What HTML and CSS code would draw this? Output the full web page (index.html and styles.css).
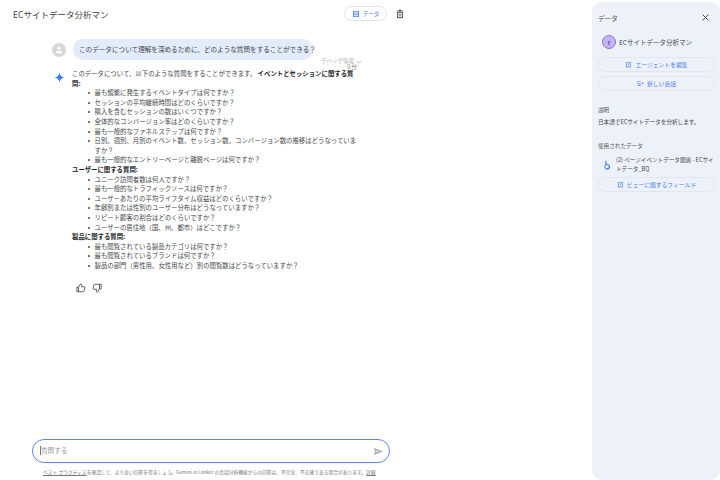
FILE: index.html
```html
<!DOCTYPE html>
<html lang="ja">
<head>
<meta charset="utf-8">
<title>ECサイトデータ分析マン</title>
<link rel="stylesheet" href="styles.css">
</head>
<body>
<div class="app">
  <main class="main">
    <header class="topbar">
      <h1 class="title">ECサイトデータ分析マン</h1>
      <div class="top-actions">
        <button class="data-btn"><svg class="ic-blue" viewBox="0 0 24 24" width="8" height="8"><path d="M3 3h18v18H3zM5.500 5.500v3h13v-3zM5.500 10.500v3h13v-3zM5.500 15.500v3h13v-3z" fill-rule="evenodd"/></svg>データ</button>
        <svg class="trash" viewBox="0 0 24 24" width="10" height="10"><path d="M9 2h6l1 2h4v2H4V4h4zM5 7h14v15H5zm2.500 2v10.500h9V9zM9.500 10.500h1.500v7.500H9.500zm3.500 0h1.500v7.500H13z" fill-rule="evenodd"/></svg>
      </div>
    </header>

    <section class="chat">
      <div class="user-row">
        <span class="avatar"><svg viewBox="0 0 24 24" width="10" height="10"><circle cx="12" cy="8" r="4.200"/><path d="M4 20c0-4 4-6 8-6s8 2 8 6z"/></svg></span>
        <div class="bubble">このデータについて理解を深めるために、どのような質問をすることができる？</div>
      </div>
      <div class="debug"><span>デバッグ情報</span><svg viewBox="0 0 10 6" width="6" height="4"><path d="M1 1l4 4 4-4" fill="none" stroke="#aaa" stroke-width="1.200"/></svg><b>0 分</b></div>

      <div class="answer-row">
        <svg class="spark" viewBox="0 0 24 24" width="11" height="11"><path d="M12 1c1 6.500 4.500 10 11 11-6.500 1-10 4.500-11 11-1-6.500-4.500-10-11-11 6.500-1 10-4.500 11-11z"/></svg>
        <div class="answer">
          <p>このデータについて、以下のような質問をすることができます。 <strong>イベントとセッションに関する質問:</strong></p>
          <ul>
            <li>最も頻繁に発生するイベントタイプは何ですか？</li>
            <li>セッションの平均継続時間はどのくらいですか？</li>
            <li>購入を含むセッションの数はいくつですか？</li>
            <li>全体的なコンバージョン率はどのくらいですか？</li>
            <li>最も一般的なファネルステップは何ですか？</li>
            <li>日別、週別、月別のイベント数、セッション数、コンバージョン数の推移はどうなっていますか？</li>
            <li>最も一般的なエントリーページと離脱ページは何ですか？</li>
          </ul>
          <p><strong>ユーザーに関する質問:</strong></p>
          <ul>
            <li>ユニーク訪問者数は何人ですか？</li>
            <li>最も一般的なトラフィックソースは何ですか？</li>
            <li>ユーザーあたりの平均ライフタイム収益はどのくらいですか？</li>
            <li>年齢別または性別のユーザー分布はどうなっていますか？</li>
            <li>リピート顧客の割合はどのくらいですか？</li>
            <li>ユーザーの居住地（国、州、都市）はどこですか？</li>
          </ul>
          <p><strong>製品に関する質問:</strong></p>
          <ul>
            <li>最も閲覧されている製品カテゴリは何ですか？</li>
            <li>最も閲覧されているブランドは何ですか？</li>
            <li>製品の部門（男性用、女性用など）別の閲覧数はどうなっていますか？</li>
          </ul>
          <div class="feedback">
            <svg viewBox="0 0 24 24" width="10" height="10"><path d="M2 10h4v11H2zM6 10l5-8c2 0 3 1.500 2.500 3.500L13 9h7c1.500 0 2 1.500 1.500 2.500L19 20c-.3.700-1 1-1.700 1H6" fill="none" stroke="#444" stroke-width="2"/></svg>
            <svg viewBox="0 0 24 24" width="10" height="10"><path d="M22 14h-4V3h4zM18 14l-5 8c-2 0-3-1.500-2.500-3.500L11 15H4c-1.500 0-2-1.500-1.500-2.500L5 4c.3-.7 1-1 1.700-1H18" fill="none" stroke="#444" stroke-width="2"/></svg>
          </div>
        </div>
      </div>
    </section>

    <footer class="composer-wrap">
      <div class="composer">
        <span class="caret"></span><span class="placeholder">質問する</span>
        <svg class="send" viewBox="0 0 24 24" width="11" height="11"><path d="M2 4l20 8-20 8 2-8-2-8zm4 6.500v3l6-1.500z" fill-rule="evenodd"/></svg>
      </div>
      <p class="disclaimer"><u>ベスト プラクティス</u>を確認して、より良い回答を得ましょう。Gemini in Looker の会話分析機能からの回答は、不完全、不正確である場合があります。<u>詳細</u></p>
    </footer>
  </main>

  <aside class="panel">
    <div class="panel-head"><span>データ</span><svg viewBox="0 0 12 12" width="7" height="7"><path d="M1 1l10 10M11 1L1 11" stroke="#444" stroke-width="1.700"/></svg></div>
    <div class="agent"><span class="agent-badge">E</span><span>ECサイトデータ分析マン</span></div>
    <button class="pill"><svg class="ic-blue" viewBox="0 0 24 24" width="7" height="7"><path d="M3 4h10v2.500H5.500v12h12V11H20v10H3zM20 2l2 2-10 10H10v-2z"/></svg>エージェントを編集</button>
    <button class="pill"><svg class="ic-blue" viewBox="0 0 24 24" width="7" height="7"><path d="M2 4h11v2H4v6h9v2H2zM2 16h11v4H2zM15 10h3V7h2v3h3v2h-3v3h-2v-3h-3z"/></svg>新しい会話</button>
    <h2 class="label desc-label">説明</h2>
    <p class="desc">日本語でECサイトデータを分析します。</p>
    <h2 class="label used-label">使用されたデータ</h2>
    <div class="source">
      <svg class="ic-blue" viewBox="0 0 24 24" width="10" height="10"><path d="M8 2h3v7.500a7 7 0 1 1-3 1.500zm4 10a4 4 0 1 0 .01 0z" fill-rule="evenodd"/></svg>
      <span>(2) ページイベントデータ関連 - ECサイトデータ_BQ</span>
    </div>
    <button class="pill"><svg class="ic-blue" viewBox="0 0 24 24" width="7" height="7"><path d="M3 4h10v2.500H5.500v12h12V11H20v10H3zM20 2l2 2-10 10H10v-2z"/></svg>ビューに関するフィールド</button>
  </aside>
</div>
</body>
</html>
```

FILE: styles.css
```css
* { box-sizing: border-box; }
html, body { margin: 0; height: 100%; }
body {
  background: #fff;
  color: #45484c;
  font-family: "Noto Sans CJK JP", "Noto Sans", sans-serif;
  font-size: 6.400px;
  overflow: hidden;
}
.app { display: flex; width: 720px; height: 480px; }
.main { width: 592px; display: flex; flex-direction: column; }
.topbar {
  width: 420px;
  height: 27px;
  padding: 0 15px 0 13px;
  display: flex;
  align-items: center;
  justify-content: space-between;
}
.title { margin: 0; font-size: 8.500px; font-weight: 400; color: #3c4043; }
.top-actions { display: flex; align-items: center; gap: 8px; }
.data-btn {
  width: 43px;
  height: 15px;
  display: flex;
  align-items: center;
  justify-content: center;
  gap: 3px;
  padding: 0;
  border: 1px solid #dfe4ee;
  border-radius: 8px;
  background: #fff;
  color: #4f83ea;
  font: inherit;
  font-size: 5.500px;
}
.ic-blue { fill: #4f83ea; flex: none; }
.trash { fill: #555; }
.chat { position: relative; flex: 1; width: 420px; padding-top: 12px; }
.user-row { display: flex; align-items: center; gap: 7px; margin-left: 52px; }
.avatar {
  width: 14px;
  height: 14px;
  border-radius: 50%;
  background: #d6d7d9;
  display: flex;
  align-items: center;
  justify-content: center;
}
.avatar svg { fill: #fff; }
.bubble {
  width: 240px;
  height: 21px;
  padding: 0 6px;
  border-radius: 10px;
  background: #e3ecfb;
  line-height: 20px;
  font-size: 6.600px;
  white-space: nowrap;
}
.debug {
  position: absolute;
  left: 321px;
  top: 31px;
  width: 42px;
  color: #b0b0b0;
  font-size: 5.500px;
  line-height: 6px;
}
.debug svg { position: absolute; left: 35px; top: 2px; }
.debug b { display: block; font-weight: 400; text-align: right; padding-right: 6px; color: #777; }
.answer-row { display: flex; margin-top: 9px; margin-left: 54px; gap: 7px; }
.spark { flex: none; margin-top: 3px; fill: #3f7cf0; }
.answer { width: 284.500px; line-height: 9.600px; }
.answer p { margin: 0; }
.answer strong { color: #26282b; font-weight: 700; }
.answer ul { margin: 0; padding-left: 22.500px; list-style: none; }
.answer li { position: relative; }
.answer li::before {
  content: "";
  position: absolute;
  left: -6.500px;
  top: 4px;
  width: 2px;
  height: 2px;
  border-radius: 50%;
  background: #45484c;
}
.feedback { display: flex; gap: 6px; margin: 13px 0 0 4px; }
.composer-wrap { width: 420px; padding: 0 0 4px 32px; }
.composer {
  position: relative;
  width: 358px;
  height: 24px;
  display: flex;
  align-items: center;
  padding: 0 0 2px 7px;
  border: 1px solid #5f84dc;
  border-radius: 12px;
  background: #fff;
}
.caret { width: 1px; height: 9px; background: #777; }
.placeholder { color: #9a9a9a; font-size: 6.600px; }
.send { position: absolute; right: 5px; top: 6px; fill: #b3b3b3; }
.disclaimer {
  margin: 5px 0 0 11px;
  width: 340px;
  font-size: 4.760px;
  line-height: 8px;
  color: #75787c;
  white-space: nowrap;
}
.panel {
  width: 128px;
  height: 478px;
  margin-top: 2px;
  padding: 9px 6px 0;
  background: #edf1fa;
  border-radius: 10px;
  display: flex;
  flex-direction: column;
}
.panel-head { display: flex; align-items: center; justify-content: space-between; padding: 0 5px 0 0; height: 13px; font-size: 6.600px; color: #555; }
.agent { display: flex; align-items: center; gap: 3px; height: 14px; margin: 11px 0 8px 4px; font-size: 6.500px; }
.agent-badge {
  width: 14px;
  height: 14px;
  border-radius: 50%;
  background: #c5b5f5;
  border: 1px solid #8a6fe0;
  display: flex;
  align-items: center;
  justify-content: center;
  font-size: 5px;
  font-weight: 700;
  color: #6a52b5;
}
.pill {
  width: 117px;
  height: 15px;
  flex: none;
  display: flex;
  align-items: center;
  justify-content: center;
  gap: 3px;
  padding: 0;
  margin-bottom: 3.500px;
  border: 1px solid #e2e6f0;
  border-radius: 8px;
  background: transparent;
  color: #4f83ea;
  font: inherit;
  font-size: 5.800px;
}
.label { margin: 0; font-size: 5.600px; font-weight: 400; color: #555; }
.desc-label { margin-top: 12px; }
.desc { margin: 4px 0 0; font-size: 5.600px; }
.used-label { margin-top: 15.500px; }
.source { display: flex; align-items: center; gap: 4px; margin: 6.500px 0 2.500px 4px; font-size: 5.600px; line-height: 9px; }
.source span { width: 98px; }
```
